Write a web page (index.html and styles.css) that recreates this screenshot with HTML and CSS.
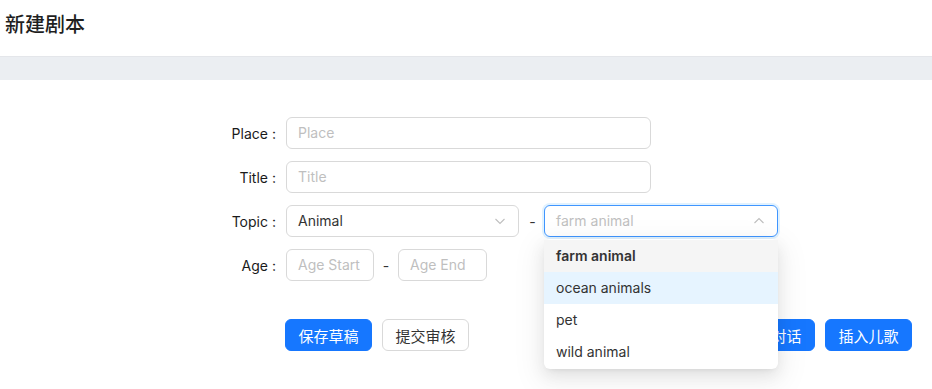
FILE: index.html
```html
<!DOCTYPE html>
<html>
<head lang="zh">
    <meta charset="UTF-8">
    <title>新建剧本</title>
    <link rel="stylesheet" href="styles.css">
</head>
<body>
<div id="header">
    <h1>新建剧本</h1>
</div>
<div id="band"></div>
<div id="main">
    <div class="row">
        <label class="label">Place<span class="colon">:</span></label>
        <div class="input wide placeholder">Place</div>
    </div>
    <div class="row">
        <label class="label">Title<span class="colon">:</span></label>
        <div class="input wide placeholder">Title</div>
    </div>
    <div class="row">
        <label class="label">Topic<span class="colon">:</span></label>
        <div class="input select">
            <span>Animal</span>
            <svg class="arrow" width="12" height="12" viewBox="0 0 12 12"><path d="M1.5 4 L6 8.5 L10.5 4" fill="none" stroke="#bfbfbf" stroke-width="1.1"/></svg>
        </div>
        <span class="dash topic-dash">-</span>
        <div class="select-wrap">
            <div class="input select focused placeholder">
                <span>farm animal</span>
                <svg class="arrow" width="12" height="12" viewBox="0 0 12 12"><path d="M1.5 8 L6 3.5 L10.5 8" fill="none" stroke="#bfbfbf" stroke-width="1.1"/></svg>
            </div>
            <ul class="dropdown">
                <li class="selected">farm animal</li>
                <li class="active">ocean animals</li>
                <li>pet</li>
                <li>wild animal</li>
            </ul>
        </div>
    </div>
    <div class="row">
        <label class="label">Age<span class="colon">:</span></label>
        <div class="input small placeholder">Age Start</div>
        <span class="dash">-</span>
        <div class="input small end placeholder">Age End</div>
    </div>
    <div id="actions">
        <div class="group">
            <button class="btn primary">保存草稿</button>
            <button class="btn">提交审核</button>
        </div>
        <div class="group">
            <button class="btn primary">插入对话</button>
            <button class="btn primary">插入儿歌</button>
        </div>
    </div>
</div>
</body>
</html>
```

FILE: styles.css
```css
* {
    padding: 0;
    margin: 0;
    box-sizing: border-box;
}

ul, ol {
    list-style: none;
}

html, body {
    min-height: 100vh;
}

body {
    font-family: Inter, "Noto Sans CJK SC", sans-serif;
    font-size: 14px;
    color: #333333;
    background: #ffffff;
}

#header {
    height: 57px;
    padding: 11px 0 0 5px;
    border-bottom: 1px solid #e4e6ea;
}

#header h1 {
    font-size: 20px;
    font-weight: 500;
    line-height: 28px;
    color: #1f1f1f;
}

#band {
    height: 23px;
    background: #ebeef2;
}

#main {
    padding: 37px 20px 0 20px;
}

.row {
    display: flex;
    align-items: center;
    height: 32px;
    margin-bottom: 12px;
}

.label {
    width: 256px;
    margin-right: 10px;
    text-align: right;
    font-size: 14px;
    color: #1a1a1a;
}

.colon {
    margin-left: 4px;
}

.input {
    height: 32px;
    border: 1px solid #d9d9d9;
    border-radius: 6px;
    padding: 0 11px;
    line-height: 30px;
    background: #ffffff;
}

.placeholder {
    color: #bfbfbf;
}

.wide {
    width: 365px;
}

.small {
    width: 88px;
}

.small.end {
    width: 89px;
}

.select {
    width: 233px;
    display: flex;
    align-items: center;
    justify-content: space-between;
}

.focused {
    width: 234px;
    border-color: #4096ff;
    box-shadow: 0 0 0 2px rgba(5, 145, 255, 0.12);
}

.arrow {
    display: block;
    margin-right: 1px;
}

.dash {
    width: 24px;
    text-align: center;
    color: #333333;
}

.topic-dash {
    width: 25px;
    padding-left: 2px;
}

.select-wrap {
    position: relative;
}

.dropdown {
    position: absolute;
    top: 34px;
    left: 0;
    width: 234px;
    padding: 1px 0;
    background: #ffffff;
    border-radius: 6px;
    z-index: 10;
    box-shadow: 0 3px 6px -4px rgba(0, 0, 0, 0.12), 0 6px 16px 0 rgba(0, 0, 0, 0.08), 0 9px 28px 8px rgba(0, 0, 0, 0.05);
}

.dropdown li {
    height: 32px;
    line-height: 32px;
    padding: 0 12px;
    color: #333333;
}

.dropdown .selected {
    background: #f5f5f5;
    font-weight: 600;
}

.dropdown .active {
    background: #e6f4ff;
}

#actions {
    display: flex;
    justify-content: space-between;
    padding-left: 265px;
    padding-top: 26px;
}

.group {
    display: flex;
    gap: 10px;
}

.btn {
    width: 87px;
    height: 32px;
    border: 1px solid #d9d9d9;
    border-radius: 6px;
    background: #ffffff;
    color: #333333;
    font-family: "Noto Sans CJK SC", sans-serif;
    font-size: 15px;
}

.btn.primary {
    background: #1677ff;
    border-color: #1677ff;
    color: #ffffff;
}
```
